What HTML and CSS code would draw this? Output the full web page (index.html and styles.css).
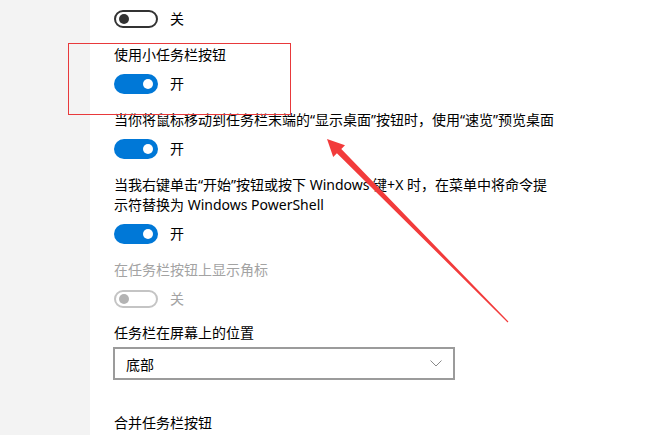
FILE: index.html
```html
<!DOCTYPE html>
<html lang="zh-CN">
<head>
    <meta charset="UTF-8">
    <meta name="viewport" content="width=device-width, initial-scale=1.0">
    <title>任务栏设置</title>
    <link rel="stylesheet" href="styles.css">
</head>
<body>

    <div class="window">
        <aside class="sidebar"></aside>

        <main class="settings">
            <div class="toggle-row">
                <span class="switch off"></span>
                <span class="state">关</span>
            </div>

            <div class="setting">
                <div class="label">使用小任务栏按钮</div>
                <div class="toggle-row">
                    <span class="switch on"></span>
                    <span class="state">开</span>
                </div>
            </div>

            <div class="setting">
                <div class="label">当你将鼠标移动到任务栏末端的“显示桌面”按钮时，使用“速览”预览桌面</div>
                <div class="toggle-row">
                    <span class="switch on"></span>
                    <span class="state">开</span>
                </div>
            </div>

            <div class="setting">
                <div class="label wrap">当我右键单击“开始”按钮或按下 Windows 键+X 时，在菜单中将命令提示符替换为 Windows PowerShell</div>
                <div class="toggle-row">
                    <span class="switch on"></span>
                    <span class="state">开</span>
                </div>
            </div>

            <div class="setting disabled">
                <div class="label">在任务栏按钮上显示角标</div>
                <div class="toggle-row">
                    <span class="switch off"></span>
                    <span class="state">关</span>
                </div>
            </div>

            <div class="setting position">
                <div class="label">任务栏在屏幕上的位置</div>
                <div class="dropdown">
                    <span>底部</span>
                    <svg class="chevron" width="12" height="7" viewBox="0 0 12 7">
                        <path d="M0.5 0.5 L6 6 L11.5 0.5" fill="none" stroke="#8a8a8a" stroke-width="1"/>
                    </svg>
                </div>
            </div>

            <div class="setting combine">
                <div class="label">合并任务栏按钮</div>
            </div>
        </main>

        <div class="highlight"></div>

        <svg class="arrow" width="659" height="435" viewBox="0 0 659 435">
            <polygon points="327,139 345,145.2 341.3,149 508.4,321.6 507.6,322.4 336.9,153.2 333.2,157" fill="#f23b3b"/>
        </svg>
    </div>

</body>
</html>
```

FILE: styles.css
```css
html, body {
    margin: 0;
    padding: 0;
    background: #ffffff;
    overflow: hidden;
}

body {
    font-family: "Noto Sans", "Noto Sans CJK SC", sans-serif;
    font-size: 14px;
    color: #000000;
}

.window {
    position: relative;
    display: flex;
    width: 659px;
    height: 435px;
}

.sidebar {
    width: 90px;
    flex-shrink: 0;
    background: #f3f3f3;
}

.settings {
    flex: 1;
    padding: 9px 0 0 24px;
}

.label {
    line-height: 20px;
    margin-bottom: 9px;
    white-space: nowrap;
}

.label.wrap {
    white-space: normal;
    width: 446px;
}

.setting {
    margin-top: 16px;
}

.toggle-row {
    display: flex;
    align-items: center;
    height: 20px;
}

.switch {
    position: relative;
    box-sizing: border-box;
    width: 44px;
    height: 20px;
    border-radius: 10px;
    margin-right: 12px;
}

.switch::after {
    content: "";
    position: absolute;
    top: 50%;
    width: 10px;
    height: 10px;
    margin-top: -5px;
    border-radius: 50%;
}

.switch.on {
    background: #0078d7;
}

.switch.on::after {
    right: 5px;
    background: #ffffff;
}

.switch.off {
    height: 18px;
    border: 2px solid #333333;
    border-radius: 9px;
    margin-top: 0;
}

.switch.off::after {
    left: 3px;
    background: #333333;
}

.state {
    line-height: 20px;
}

.disabled .label,
.disabled .state {
    color: #a3a3a3;
}

.disabled .switch.off {
    border-color: #c4c4c4;
}

.disabled .switch.off::after {
    background: #b3b3b3;
}

.position {
    margin-top: 14px;
}

.position .label {
    margin-bottom: 4px;
}

.dropdown {
    box-sizing: border-box;
    display: flex;
    align-items: center;
    justify-content: space-between;
    width: 342px;
    height: 33px;
    margin-left: -1px;
    padding: 0 11px 0 11px;
    border: 2px solid #9b9b9b;
}

.chevron {
    display: block;
}

.combine {
    margin-top: 33px;
}

.highlight {
    position: absolute;
    left: 68px;
    top: 43px;
    width: 221px;
    height: 70px;
    border: 1px solid #e8393b;
}

.arrow {
    position: absolute;
    left: 0;
    top: 0;
    pointer-events: none;
}
```
